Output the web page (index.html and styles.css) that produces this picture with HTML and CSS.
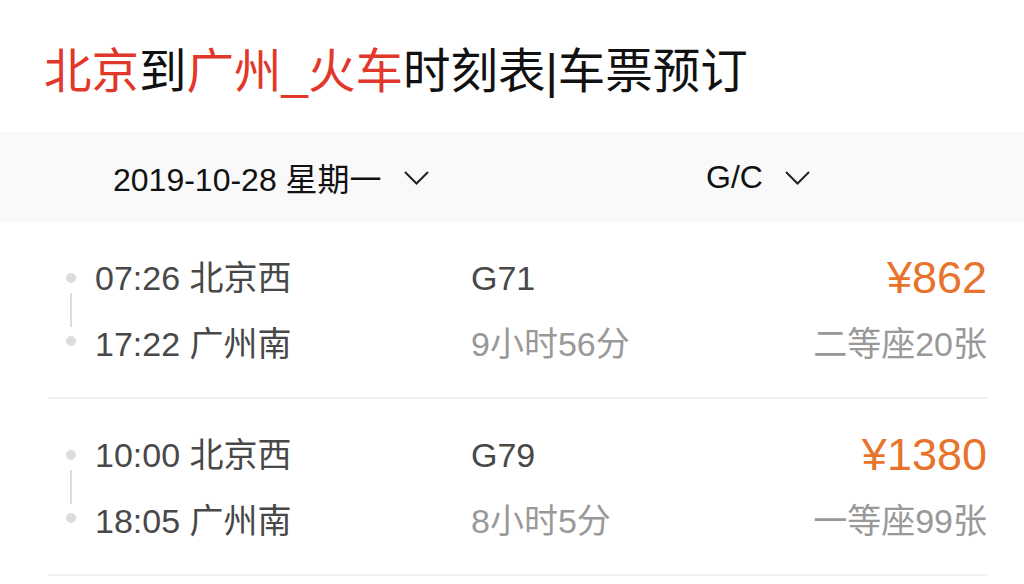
FILE: index.html
```html
<!DOCTYPE html>
<html lang="zh-CN">
<head>
<meta charset="utf-8">
<title>北京到广州_火车时刻表|车票预订</title>
<link rel="stylesheet" href="styles.css">
</head>
<body>
<header class="head">
  <h1 class="title"><span class="hl">北京</span>到<span class="hl">广州_火车</span>时刻表|车票预订</h1>
</header>
<div class="filter">
  <div class="filter-item">
    <span>2019-10-28 星期一</span>
    <svg class="chev" width="25" height="14" viewBox="0 0 25 14"><path d="M1 1 L12.5 12.5 L24 1" fill="none" stroke="#222" stroke-width="2"/></svg>
  </div>
  <div class="filter-item">
    <span>G/C</span>
    <svg class="chev" width="25" height="14" viewBox="0 0 25 14"><path d="M1 1 L12.5 12.5 L24 1" fill="none" stroke="#222" stroke-width="2"/></svg>
  </div>
</div>
<ul class="list">
  <li class="row">
    <div class="timeline"><span class="dot"></span><span class="vline"></span><span class="dot"></span></div>
    <div class="col">
      <div class="main">07:26 北京西</div>
      <div class="main">17:22 广州南</div>
    </div>
    <div class="col">
      <div class="main">G71</div>
      <div class="sub">9小时56分</div>
    </div>
    <div class="col right">
      <div class="price">¥862</div>
      <div class="sub">二等座20张</div>
    </div>
  </li>
  <li class="row">
    <div class="timeline"><span class="dot"></span><span class="vline"></span><span class="dot"></span></div>
    <div class="col">
      <div class="main">10:00 北京西</div>
      <div class="main">18:05 广州南</div>
    </div>
    <div class="col">
      <div class="main">G79</div>
      <div class="sub">8小时5分</div>
    </div>
    <div class="col right">
      <div class="price">¥1380</div>
      <div class="sub">一等座99张</div>
    </div>
  </li>
</ul>
</body>
</html>
```
FILE: styles.css
```css
* { box-sizing: border-box; }
html, body { margin: 0; padding: 0; background: #fff; }
body {
  font-family: "Liberation Sans", "Noto Sans CJK SC", sans-serif;
  color: #111;
  width: 1024px;
  overflow: hidden;
}
.head {
  height: 132px;
  padding: 48px 0 0 44px;
}
.title {
  margin: 0;
  font-size: 47.5px;
  line-height: 48px;
  font-weight: 400;
  color: #111;
  white-space: nowrap;
}
.hl { color: #e2372b; }
.filter {
  height: 90px;
  background: #f9f9f9;
  display: grid;
  grid-template-columns: 593px 1fr;
  align-items: center;
  padding-left: 113px;
  font-size: 32px;
  color: #111;
}
.filter-item {
  display: flex;
  align-items: center;
  gap: 22px;
}
.chev { display: block; margin-top: 2px; }
.list {
  list-style: none;
  margin: 0 37px 0 48px;
  padding: 0;
}
.row {
  display: grid;
  grid-template-columns: 47px 376px 1fr auto;
  padding: 23px 0 20px;
  border-bottom: 2px solid #f0f0f0;
}
.timeline {
  display: flex;
  flex-direction: column;
  align-items: center;
  width: 10px;
  margin-left: 18px;
  padding-top: 28px;
}
.dot {
  width: 10px;
  height: 10px;
  border-radius: 50%;
  background: #dcdcdc;
}
.vline {
  width: 2px;
  height: 34px;
  margin: 10px 0 9px;
  background: #dcdcdc;
}
.col { display: flex; flex-direction: column; }
.right { align-items: flex-end; }
.main, .sub, .price {
  height: 66px;
  line-height: 66px;
  white-space: nowrap;
}
.main { font-size: 34px; color: #484848; }
.sub { font-size: 34px; color: #999; }
.price { font-size: 45px; color: #e8732c; }
```
